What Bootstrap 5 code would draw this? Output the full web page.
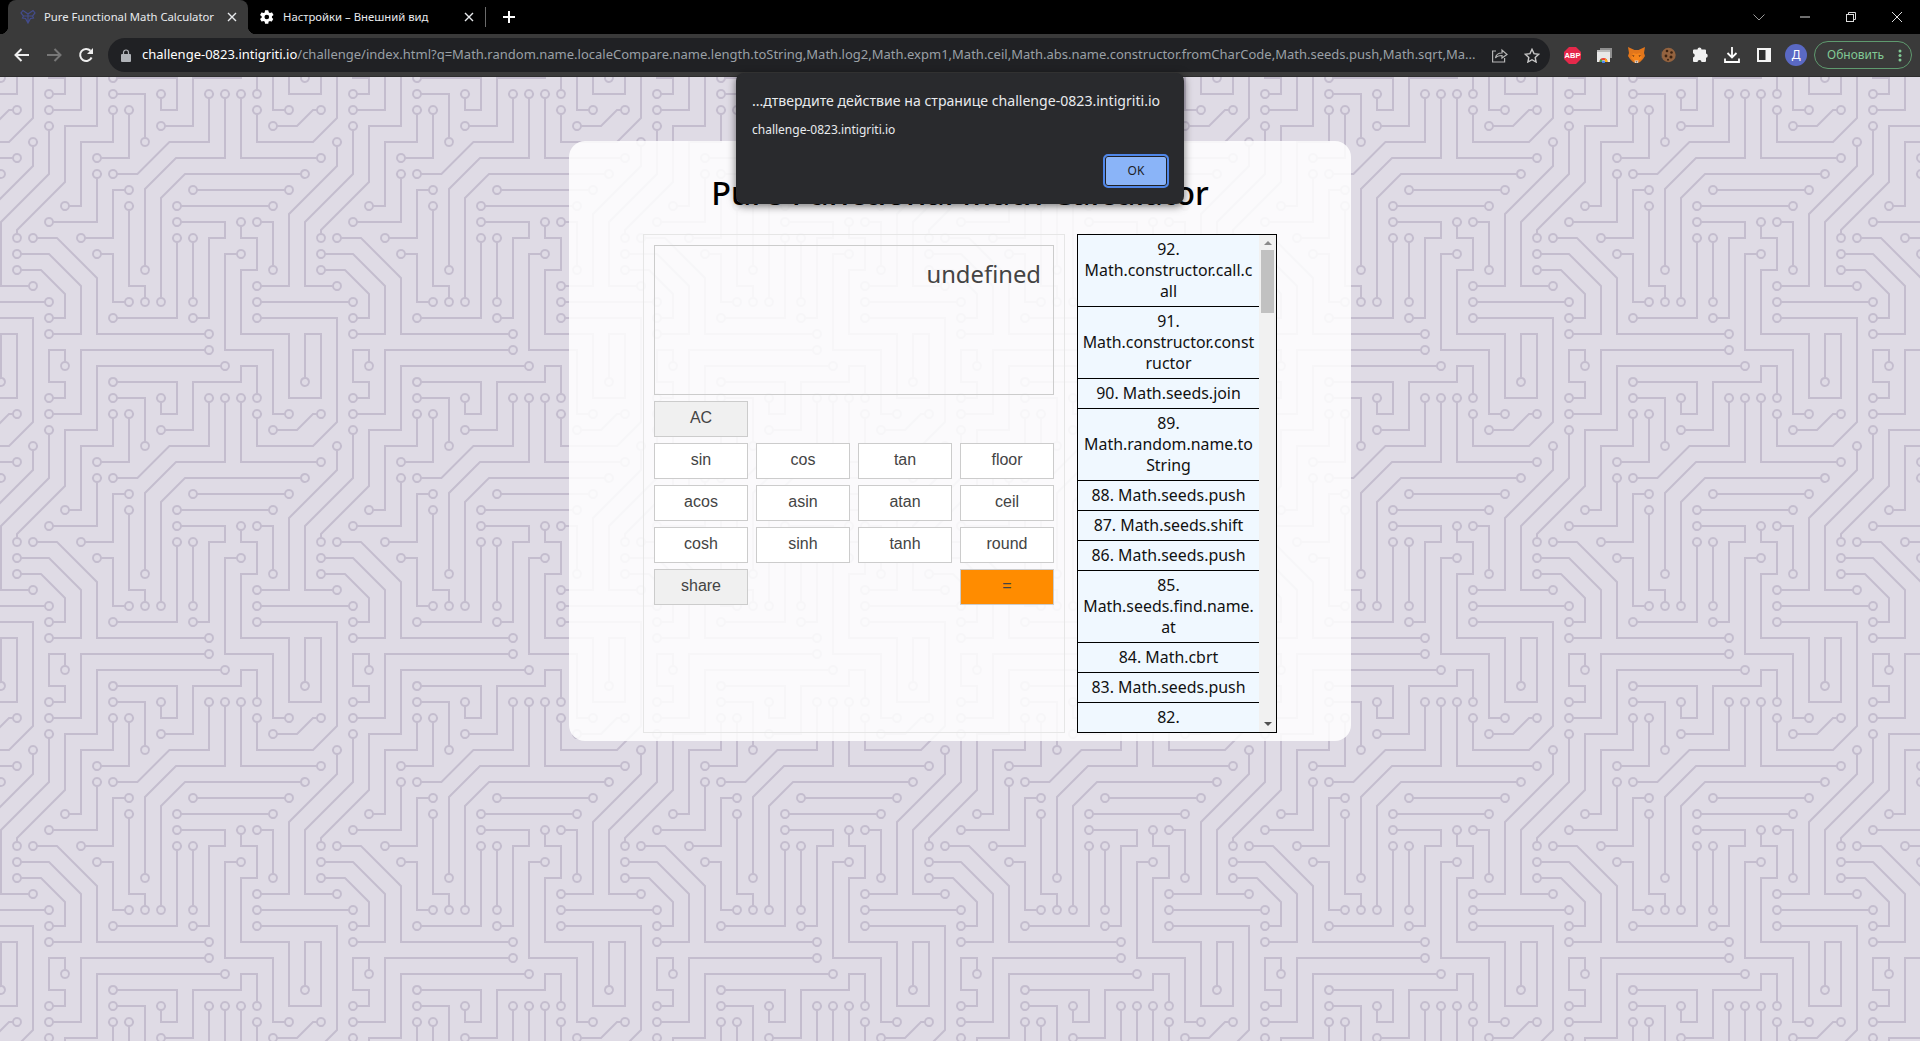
<!DOCTYPE html>
<html lang="en">
<head>
<meta charset="utf-8">
<title>Pure Functional Math Calculator</title>
<link href="https://cdn.jsdelivr.net/npm/bootstrap@5.3.0/dist/css/bootstrap.min.css" rel="stylesheet">
<style>
html,body{height:100%;overflow:hidden}
body{font-family:"Noto Sans","Liberation Sans",sans-serif;background:#dfdbe5}
.tabstrip{height:34px;background:#000;color:#e8eaed}
.ctab{height:34px;font-size:11.3px;padding-left:12px;flex:none}
.ctab-on{position:relative;width:240px;margin-left:8px;background:#3a3a3a;border-radius:8px 8px 0 0}
.ctab-on::before,.ctab-on::after{content:"";position:absolute;bottom:0;width:8px;height:8px}
.ctab-on::before{left:-8px;background:radial-gradient(circle at 0 0,#000 8px,#3a3a3a 8.5px)}
.ctab-on::after{right:-8px;background:radial-gradient(circle at 100% 0,#000 8px,#3a3a3a 8.5px)}
.ctab-off{width:237px;padding-left:11px}
.tabname{margin-left:8px;flex:1;white-space:nowrap;overflow:hidden}
.tabx{width:24px;flex:none;display:flex;justify-content:center;margin-right:4px}
.tabsep{width:1px;height:20px;background:#6a6a6a;flex:none}
.plusbtn{width:46px;flex:none;display:flex;justify-content:center}
.winbtn{width:46px;height:34px;flex:none;display:flex;align-items:center;justify-content:center}
.toolbar{height:42px;background:#3a3a3a;padding-left:6px;border-bottom:1px solid #2e2e2e;box-sizing:content-box}
.slot{width:32px;height:42px;flex:none;display:flex;align-items:center;justify-content:center}
.omnibox{width:1442px;height:34px;margin:0 6px;background:#202124;border-radius:17px;padding-left:10px;padding-right:2px;flex:none}
.lockwrap{width:16px;flex:none;display:flex;justify-content:center;margin-right:8px}
.urltext{flex:1;font-size:13px;white-space:nowrap;overflow:hidden;color:#9aa0a6}
.urltext b{font-weight:400;color:#fff}
.avatar{width:22px;height:22px;border-radius:50%;background:#5a69c4;color:#fff;font-size:12px;line-height:22px;text-align:center}
.updpill{width:98px;height:28px;margin-left:2px;border:1px solid #5f9a6f;border-radius:14px;color:#81c995;font-size:12px;padding-left:12px;padding-right:9px;flex:none}
.pagearea{height:964px;background-color:#dfdbe5;padding-top:64px}
.panel{width:782px;height:600px;background:rgba(255,255,255,.86);border-radius:16px;padding-top:21px}
.apptitle{font-size:32.4px;line-height:60px;height:72px;margin:0;font-weight:500;color:#000;text-align:center}
.bodyrow{width:634px;height:499px;margin:0 auto;gap:12px}
.calc{width:422px;height:499px;border:1px solid #e6e6e6;padding:10px}
.screen{height:150px;border:1px solid #ccc;padding:11px 12px;text-align:right;font-size:23.8px;line-height:34px;color:#444;margin-bottom:6px}
.keys{display:grid;grid-template-columns:repeat(4,94px);gap:6px 8px;grid-auto-rows:36px}
.keys .btn{--bs-btn-padding-x:0;--bs-btn-padding-y:0;padding-bottom:2px;font-family:"Liberation Sans",Arial,sans-serif;font-size:16px;color:#444;background:#fff;border:1px solid #ccc;border-radius:0}
.keys .keygrey{background:#f0f0f0}
.keys .keyorange{background:#ff8c00;grid-column:4}
.keys .keyfirst{grid-column:1}
.history{width:200px;height:499px;border:1px solid #000;overflow:hidden;flex:none}
.histlist{width:181px;flex:none;height:497px;overflow:hidden;margin:0;padding:0;list-style:none}
.histlist li{background:#f0f8ff;border-bottom:1px solid #000;padding:4px 0;text-align:center;font-size:15.9px;line-height:21px;color:#111;white-space:nowrap}
.sbar{width:17px;flex:none;background:#f1f1f1;padding:6px 2px 0}
.sbar-thumb{height:63px;background:#c1c1c1;margin-top:5px;width:13px}
.sbar-spacer{flex:1}
.tri-up,.tri-dn{width:0;height:0;border-left:4px solid transparent;border-right:4px solid transparent;margin:0 auto}
.tri-up{border-bottom:4px solid #8a8a8a}
.tri-dn{border-top:4px solid #505050;margin-bottom:6px}
.jsdialog{position:absolute;left:736px;top:73px;width:448px;height:131px;background:#292a2d;border-radius:8px;box-shadow:0 2px 8px rgba(0,0,0,.55);padding:0 16px;color:#e8eaed;z-index:10}
.jsd-title{font-size:14.1px;line-height:20px;margin-top:18px;white-space:nowrap}
.jsd-host{font-size:12px;line-height:18px;margin-top:10px}
.jsd-ok{display:block;margin:15px -1px 0 auto;width:66px;height:34px;background:#8ab4f8;border:2px solid #4f86e8;box-shadow:inset 0 0 0 1px #202124;border-radius:5px;color:#202124;font-size:12px;padding:0;--bs-btn-padding-x:0}
</style>
</head>
<body>
<div class="tabstrip d-flex align-items-center">
  <div class="ctab ctab-on d-flex align-items-center">
    <svg width="16" height="16" viewBox="0 0 16 16" fill="none" stroke="#434c8c" stroke-width="1.200"><path d="M8 5 3 1.500 1 4l2.500 3-1 2 3 .5L8 14l2.500-4.500 3-.5-1-2L15 4l-2-2.500zM8 5v9M3.500 7h9"/></svg>
    <span class="tabname">Pure Functional Math Calculator</span>
    <span class="tabx"><svg width="10" height="10" viewBox="0 0 10 10" stroke="#e8eaed" stroke-width="1.400"><path d="M1 1l8 8M9 1l-8 8"/></svg></span>
  </div>
  <div class="ctab ctab-off d-flex align-items-center">
    <svg width="16" height="16" viewBox="0 0 24 24" fill="#fff"><path fill-rule="evenodd" d="M19.400 13a7.500 7.500 0 0 0 0-2l2.100-1.600a.5.500 0 0 0 .1-.6l-2-3.500a.5.500 0 0 0-.6-.2l-2.500 1a7.300 7.300 0 0 0-1.700-1L14 2.400a.5.500 0 0 0-.5-.4h-4a.5.500 0 0 0-.5.400L8.600 5.100a7.300 7.300 0 0 0-1.700 1l-2.500-1a.5.500 0 0 0-.6.2l-2 3.500a.5.500 0 0 0 .1.600L4 11a7.500 7.500 0 0 0 0 2l-2.100 1.600a.5.500 0 0 0-.1.600l2 3.500c.1.200.4.300.6.200l2.500-1c.5.400 1.100.8 1.700 1l.4 2.700c0 .2.200.4.500.4h4c.3 0 .5-.2.500-.4l.4-2.700c.6-.2 1.200-.6 1.700-1l2.500 1c.2.100.5 0 .6-.2l2-3.500a.5.500 0 0 0-.1-.6zM11.700 15.500a3.500 3.500 0 1 1 0-7 3.500 3.500 0 0 1 0 7z"/></svg>
    <span class="tabname">Настройки – Внешний вид</span>
    <span class="tabx"><svg width="10" height="10" viewBox="0 0 10 10" stroke="#e8eaed" stroke-width="1.400"><path d="M1 1l8 8M9 1l-8 8"/></svg></span>
  </div>
  <span class="tabsep"></span>
  <span class="plusbtn"><svg width="12" height="12" viewBox="0 0 12 12" stroke="#fff" stroke-width="2"><path d="M6 0v12M0 6h12"/></svg></span>
  <div class="d-flex ms-auto">
    <span class="winbtn"><svg width="12" height="7" viewBox="0 0 12 7" fill="none" stroke="#9a9a9a"><path d="M.5.5 6 6 11.500.5"/></svg></span>
    <span class="winbtn"><svg width="10" height="2" viewBox="0 0 10 2" stroke="#ddd"><path d="M0 1h10"/></svg></span>
    <span class="winbtn"><svg width="10" height="10" viewBox="0 0 10 10" fill="none" stroke="#ddd"><rect x=".5" y="2.500" width="7" height="7"/><path d="M2.500 2.500v-2h7v7h-2"/></svg></span>
    <span class="winbtn"><svg width="10" height="10" viewBox="0 0 10 10" stroke="#ddd"><path d="M0 0l10 10M10 0 0 10"/></svg></span>
  </div>
</div>
<div class="toolbar d-flex align-items-center">
  <span class="slot"><svg width="16" height="14" viewBox="0 0 16 14" fill="none" stroke="#eee" stroke-width="2"><path d="M15 7H2M7.500 1 1.500 7l6 6"/></svg></span>
  <span class="slot"><svg width="16" height="14" viewBox="0 0 16 14" fill="none" stroke="#777" stroke-width="2"><path d="M1 7h13M8.500 1l6 6-6 6"/></svg></span>
  <span class="slot"><svg width="16" height="16" viewBox="0 0 16 16" fill="none" stroke="#eee" stroke-width="2"><path d="M13.600 10.500A6 6 0 1 1 12.500 3.800"/><path d="M15 1v6H9z" fill="#eee" stroke="none"/></svg></span>
  <div class="omnibox d-flex align-items-center">
    <span class="lockwrap"><svg width="10" height="13" viewBox="0 0 10 13"><path fill="#b0b3b8" d="M1 5h8a1 1 0 0 1 1 1v6a1 1 0 0 1-1 1H1a1 1 0 0 1-1-1V6a1 1 0 0 1 1-1z"/><path fill="none" stroke="#b0b3b8" stroke-width="1.200" d="M2.500 5V3.500a2.500 2.500 0 0 1 5 0V5"/></svg></span>
    <span class="urltext"><b>challenge-0823.intigriti.io</b>/challenge/index.html?q=Math.random.name.localeCompare.name.length.toString,Math.log2,Math.expm1,Math.ceil,Math.abs.name.constructor.fromCharCode,Math.seeds.push,Math.sqrt,Ma...</span>
    <span class="slot"><svg width="16" height="15" viewBox="0 0 16 15" fill="none" stroke="#b5b5b5" stroke-width="1.200"><path d="M4 3H.6v11h12V10"/><path d="M3.500 10c.5-3.500 3-5 6.500-5V2l5 4.500L10 10V7.500c-3 0-5 .5-6.500 2.500z"/></svg></span>
    <span class="slot"><svg width="16" height="15" viewBox="0 0 16 15" fill="none" stroke="#c8c8c8" stroke-width="1.400"><path d="M8 1.300l2 4.300 4.700.6-3.500 3.200.9 4.600L8 11.700 3.900 14l.9-4.600L1.300 6.200 6 5.600z"/></svg></span>
  </div>
  <span class="slot"><svg width="17" height="17" viewBox="0 0 17 17"><path fill="#e5284a" d="M5 0h7l5 5v7l-5 5H5l-5-5V5z"/><text x="8.500" y="11" text-anchor="middle" font-family="Liberation Sans,sans-serif" font-size="7.500" font-weight="700" fill="#fff">ABP</text></svg></span>
  <span class="slot"><svg width="16" height="16" viewBox="0 0 16 16"><rect x="4" y="1" width="12" height="10" fill="#8f8f8f"/><rect x="1" y="3" width="13" height="12" fill="#e8e8e8"/><rect x="1" y="3" width="13" height="2" fill="#bbb"/><path d="M3.500 15a4 4 0 0 1 8 0h-2a2 2 0 0 0-4 0z" fill="#ea4335"/><path d="M3.500 15a4 4 0 0 1 1.500-3.100L6.500 14l-1 1z" fill="#34a853"/><path d="M9.500 11.500a4 4 0 0 1 2 3.500h-2l-.5-2z" fill="#fbbc05"/><circle cx="7.500" cy="15" r="1.500" fill="#4285f4"/></svg></span>
  <span class="slot"><svg width="17" height="16" viewBox="0 0 17 16"><path fill="#e2761b" d="M0 0l6.500 3h4L17 0l-1 6 1 3-2 3-3 3-2 1H7l-2-1-3-3-2-3 1-3z"/><path fill="#f6851b" d="M5 6l3.500 1L12 6l2 5-3.500 3h-4L3 11z"/><path fill="#763d16" d="M4 8l2.500.5L5.500 10zM13 8l-2.500.5 1 1.500z"/><path fill="#e4d5c9" d="M6.500 13.500h4L10 16H7z"/><path fill="#222" d="M7.500 14.500h2l-1 1z"/></svg></span>
  <span class="slot"><svg width="16" height="16" viewBox="0 0 16 16"><circle cx="8.500" cy="8" r="7.200" fill="#94633f"/><path fill="#4a4a4a" d="M2 3.500A7.200 7.200 0 0 0 3 13L1.500 9z"/><circle cx="7" cy="4" r="1.300" fill="#3c2210"/><circle cx="11.500" cy="5.500" r="1.300" fill="#3c2210"/><circle cx="6" cy="9" r="1.400" fill="#3c2210"/><circle cx="11" cy="10" r="1.500" fill="#3c2210"/><circle cx="8" cy="12.800" r="1" fill="#3c2210"/></svg></span>
  <span class="slot"><svg width="16" height="16" viewBox="0 0 16 16"><path fill="#f1f1f1" d="M5.500 2.500a2 2 0 0 1 4 0H13a1 1 0 0 1 1 1V6.500a2.200 2.200 0 0 1 0 4.300V14a1 1 0 0 1-1 1H9.500a2 2 0 0 0-4 0H2a1 1 0 0 1-1-1v-3.500a2.200 2.200 0 0 0 0-4.300V3.500a1 1 0 0 1 1-1z"/></svg></span>
  <span class="slot"><svg width="16" height="16" viewBox="0 0 16 16" fill="none" stroke="#fff" stroke-width="1.800"><path d="M8 0v10M3.500 6 8 10.500 12.500 6"/><path d="M1 11.500V15h14v-3.500"/></svg></span>
  <span class="slot"><svg width="14" height="14" viewBox="0 0 14 14"><rect width="14" height="14" fill="#f4f4f4"/><rect x="2" y="2" width="6.500" height="10" fill="#2e2e2e"/></svg></span>
  <span class="slot"><span class="avatar">Д</span></span>
  <div class="updpill d-flex align-items-center justify-content-between">
    <span>Обновить</span>
    <svg width="4" height="13" viewBox="0 0 4 13" fill="#81c995"><circle cx="2" cy="2" r="1.500"/><circle cx="2" cy="6.500" r="1.500"/><circle cx="2" cy="11" r="1.500"/></svg>
  </div>
</div>
<main class="pagearea" id="circuitbg">
  <section class="panel mx-auto">
    <h1 class="apptitle">Pure Functional Math Calculator</h1>
    <div class="bodyrow d-flex">
      <div class="calc">
        <div class="screen">undefined</div>
        <div class="keys">
          <button class="btn keygrey keyfirst">AC</button>
          <button class="btn keyfirst">sin</button><button class="btn">cos</button><button class="btn">tan</button><button class="btn">floor</button>
          <button class="btn">acos</button><button class="btn">asin</button><button class="btn">atan</button><button class="btn">ceil</button>
          <button class="btn">cosh</button><button class="btn">sinh</button><button class="btn">tanh</button><button class="btn">round</button>
          <button class="btn keygrey">share</button><button class="btn keyorange">=</button>
        </div>
      </div>
      <div class="history d-flex">
        <ul class="histlist">
          <li>92.<br>Math.constructor.call.c<br>all</li>
          <li>91.<br>Math.constructor.const<br>ructor</li>
          <li>90. Math.seeds.join</li>
          <li>89.<br>Math.random.name.to<br>String</li>
          <li>88. Math.seeds.push</li>
          <li>87. Math.seeds.shift</li>
          <li>86. Math.seeds.push</li>
          <li>85.<br>Math.seeds.find.name.<br>at</li>
          <li>84. Math.cbrt</li>
          <li>83. Math.seeds.push</li>
          <li>82.<br>Math.seeds.find.name</li>
        </ul>
        <div class="sbar d-flex flex-column">
          <span class="tri-up"></span>
          <div class="sbar-thumb"></div>
          <div class="sbar-spacer"></div>
          <span class="tri-dn"></span>
        </div>
      </div>
    </div>
  </section>
</main>
<div class="jsdialog" role="alertdialog">
  <div class="jsd-title">...дтвердите действие на странице challenge-0823.intigriti.io</div>
  <div class="jsd-host">challenge-0823.intigriti.io</div>
  <button class="btn jsd-ok">OK</button>
</div>
<script src="https://cdn.jsdelivr.net/npm/bootstrap@5.3.0/dist/js/bootstrap.bundle.min.js"></script>
<script>
(function(){
var d="M44.1 224a5 5 0 1 1 0 2H0v-2h44.1zm160 48a5 5 0 1 1 0 2H82v-2h122.1zm57.8-46a5 5 0 1 1 0-2H304v2h-42.1zm0 16a5 5 0 1 1 0-2H304v2h-42.1zm6.2-114a5 5 0 1 1 0 2h-86.2a5 5 0 1 1 0-2h86.2zm-256-48a5 5 0 1 1 0 2H0v-2h12.1zm185.8 34a5 5 0 1 1 0-2h86.2a5 5 0 1 1 0 2h-86.2zM258 12.1a5 5 0 1 1-2 0V0h2v12.1zm-64 208a5 5 0 1 1-2 0v-54.2a5 5 0 1 1 2 0v54.2zm48-198.2V80h62v2h-64V21.9a5 5 0 1 1 2 0zm16 16V64h46v2h-48V37.9a5 5 0 1 1 2 0zm-128 96V208h16v12.1a5 5 0 1 1-2 0V210h-16v-76.1a5 5 0 1 1 2 0zm-5.9-21.9a5 5 0 1 1 0 2H114v48H85.9a5 5 0 1 1 0-2H112v-48h12.1zm-6.2 130a5 5 0 1 1 0-2H176v-74.1a5 5 0 1 1 2 0V242h-60.1zm-16-64a5 5 0 1 1 0-2H114v48h10.1a5 5 0 1 1 0 2H112v-48h-10.1zM66 284.1a5 5 0 1 1-2 0V274H50v30h-2v-32h18v12.1zM236.1 176a5 5 0 1 1 0 2H226v94h48v32h-2v-30h-48v-98h12.1zm25.8-30a5 5 0 1 1 0-2H274v44.1a5 5 0 1 1-2 0V146h-10.1zm-64 96a5 5 0 1 1 0-2H208v-80h16v-14h-42.1a5 5 0 1 1 0-2H226v18h-16v80h-12.1zm86.2-210a5 5 0 1 1 0 2H272V0h2v32h10.1zM98 101.9V146H53.9a5 5 0 1 1 0-2H96v-42.1a5 5 0 1 1 2 0zM53.9 34a5 5 0 1 1 0-2H80V0h2v34H53.9zm60.1 3.9V66H82v64H69.9a5 5 0 1 1 0-2H80V64h32V37.9a5 5 0 1 1 2 0zM101.9 82a5 5 0 1 1 0-2H128V37.9a5 5 0 1 1 2 0V82h-28.1zm16-64a5 5 0 1 1 0-2H146v44.1a5 5 0 1 1-2 0V18h-26.1zm102.2 270a5 5 0 1 1 0 2H98v14h-2v-16h124.1zM242 149.9V160h16v34h-16v62h48v48h-2v-46h-48v-66h16v-30h-16v-12.1a5 5 0 1 1 2 0zM53.9 18a5 5 0 1 1 0-2H64V2H48V0h18v18H53.9zm112 32a5 5 0 1 1 0-2H192V0h50v2h-48v48h-28.1zm-48-48a5 5 0 0 1-9.8-2h2.07a3 3 0 1 0 5.66 0H178v34h-18V21.9a5 5 0 1 1 2 0V32h14V2h-58.1zm0 96a5 5 0 1 1 0-2H137l32-32h39V21.9a5 5 0 1 1 2 0V66h-40.17l-32 32H117.9zm28.1 90.1a5 5 0 1 1-2 0v-76.51L175.59 80H224V21.9a5 5 0 1 1 2 0V82h-49.59L146 112.41v75.69zm16 32a5 5 0 1 1-2 0v-99.51L184.59 96H300.1a5 5 0 0 1 3.9-3.9v2.07a3 3 0 0 0 0 5.66v2.07a5 5 0 0 1-3.9-3.9H185.41L162 121.41v98.69zm-144-64a5 5 0 1 1-2 0v-3.51l48-48V48h32V0h2v50H66v55.41l-48 48v2.69zM50 53.9v43.51l-48 48V208h26.1a5 5 0 1 1 0 2H0v-65.41l48-48V53.9a5 5 0 1 1 2 0zm-16 16V89.41l-34 34v-2.82l32-32V69.9a5 5 0 1 1 2 0zM12.1 32a5 5 0 1 1 0 2H9.41L0 43.41V40.6L8.59 32h3.51zm265.8 18a5 5 0 1 1 0-2h18.69l7.41-7.41v2.82L297.41 50H277.9zm-16 160a5 5 0 1 1 0-2H288v-71.41l16-16v2.82l-14 14V210h-28.1zm-208 32a5 5 0 1 1 0-2H64v-22.59L40.59 194H21.9a5 5 0 1 1 0-2H41.41L66 216.59V242H53.9zm150.2 14a5 5 0 1 1 0 2H96v-56.6L56.6 162H37.9a5 5 0 1 1 0-2h19.5L98 200.6V256h106.1zm-150.2 2a5 5 0 1 1 0-2H80v-46.59L48.59 178H21.9a5 5 0 1 1 0-2H49.41L82 208.59V258H53.9zM34 39.8v1.61L9.41 66H0v-2h8.59L32 40.59V0h2v39.8zM2 300.1a5 5 0 0 1 3.9 3.9H3.83A3 3 0 0 0 0 302.17V256h18v48h-2v-46H2v42.1zM34 241v63h-2v-62H0v-2h34v1zM17 18H0v-2h16V0h2v18h-1zm273-2h14v2h-16V0h2v16zm-32 273v15h-2v-14h-14v14h-2v-16h18v1zM0 92.1A5.02 5.02 0 0 1 6 97a5 5 0 0 1-6 4.9v-2.07a3 3 0 1 0 0-5.66V92.1zM80 272h2v32h-2v-32zm37.9 32h-2.07a3 3 0 0 0-5.66 0h-2.07a5 5 0 0 1 9.8 0zM5.9 0A5.02 5.02 0 0 1 0 5.9V3.83A3 3 0 0 0 3.83 0H5.9zm294.2 0h2.07A3 3 0 0 0 304 3.83V5.9a5 5 0 0 1-3.9-5.9zm3.9 300.1v2.07a3 3 0 0 0-1.83 1.83h-2.07a5 5 0 0 1 3.9-3.9z";
var re=/([MmHhVvLlZzAa])([^MmHhVvLlZzAa]*)/g,m,x=0,y=0,sx=0,sy=0,holes="";
while((m=re.exec(d))){
  var c=m[1],n=(m[2].match(/-?\d*\.?\d+/g)||[]).map(Number);
  if(c=="M"||c=="m"){x=c=="m"?x+n[0]:n[0];y=c=="m"?y+n[1]:n[1];sx=x;sy=y;}
  else if(c=="H")x=n[0];else if(c=="h")x+=n[0];
  else if(c=="V")y=n[0];else if(c=="v")y+=n[0];
  else if(c=="L"){x=n[0];y=n[1];}else if(c=="l"){x+=n[0];y+=n[1];}
  else if(c=="Z"||c=="z"){x=sx;y=sy;}
  else if(c=="A"){x=n[5];y=n[6];}
  else if(c=="a"){
    var dx=n[5],dy=n[6];
    if(n[0]==5&&n[3]==1&&n[4]==1&&Math.abs(dx)+Math.abs(dy)==2){
      var cx=x+dx/2+dy/2*4.9,cy=y+dy/2-dx/2*4.9;
      holes+="M"+cx+" "+(cy-3)+"a3 3 0 1 0 0 6a3 3 0 1 0 0-6z";
    }
    x+=dx;y+=dy;
  }
}
var svg='<svg xmlns="http://www.w3.org/2000/svg" width="304" height="304" viewBox="0 0 304 304"><path fill="#9C92AC" fill-opacity=".4" fill-rule="evenodd" d="'+d+holes+'"/></svg>';
document.getElementById("circuitbg").style.backgroundImage='url("data:image/svg+xml,'+encodeURIComponent(svg)+'")';
})();
</script>
</body>
</html>
